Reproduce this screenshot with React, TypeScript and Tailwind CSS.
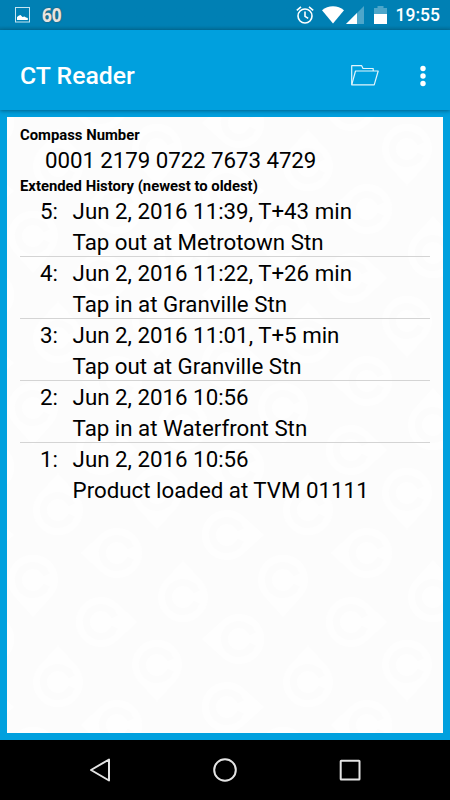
import React from 'react';

type Direction = 'up' | 'down' | 'left' | 'right';

interface Pin {
  x: number;
  y: number;
  dir: Direction;
}

interface Trip {
  index: number;
  time: string;
  detail: string;
}

const trips: Trip[] = [
  { index: 5, time: 'Jun 2, 2016 11:39, T+43 min', detail: 'Tap out at Metrotown Stn' },
  { index: 4, time: 'Jun 2, 2016 11:22, T+26 min', detail: 'Tap in at Granville Stn' },
  { index: 3, time: 'Jun 2, 2016 11:01, T+5 min', detail: 'Tap out at Granville Stn' },
  { index: 2, time: 'Jun 2, 2016 10:56', detail: 'Tap in at Waterfront Stn' },
  { index: 1, time: 'Jun 2, 2016 10:56', detail: 'Product loaded at TVM 01111' },
];

// One tile of the watermark, repeated every TILE_W x TILE_H
const TILE_W = 250;
const TILE_H = 172;
const pins: Pin[] = [
  { x: 26, y: 119, dir: 'down' },
  { x: 176, y: 136, dir: 'up' },
  { x: 94, y: 161, dir: 'right' },
  { x: 51, y: 221, dir: 'up' },
  { x: 150, y: 204, dir: 'down' },
  { x: 110, y: 264, dir: 'left' },
  { x: 232, y: 178, dir: 'left' },
  { x: 220, y: 246, dir: 'right' },
];

const angles: Record<Direction, number> = { up: 0, right: 90, down: 180, left: 270 };

function Watermark() {
  const items: React.ReactNode[] = [];
  for (let row = -2; row < 4; row++) {
    for (let col = -1; col < 2; col++) {
      pins.forEach((p, i) => {
        items.push(
          <g key={`${row}-${col}-${i}`} transform={`translate(${p.x + col * TILE_W} ${p.y + row * TILE_H})`}>
            <path d="M0-37L19-16A25 25 0 1 1-19-16Z" fill="#fefefe" transform={`rotate(${angles[p.dir]})`} />
            <path d="M13.5-5A14.5 14.5 0 1 0 13.5 5" fill="none" stroke="#fcfcfc" strokeWidth="7" />
          </g>
        );
      });
    }
  }
  return (
    <svg className="absolute inset-0 h-full w-full" aria-hidden="true">
      {items}
    </svg>
  );
}

function StatusBar() {
  return (
    <div className="flex h-[30px] shrink-0 items-center bg-linear-to-b from-[#0080b4] from-85% to-[#00739f] pl-[15px] pr-[10px]">
      <svg width="15" height="16" viewBox="0 0 15 16" fill="none">
        <rect x=".5" y=".5" width="14" height="14.5" stroke="#c5e5f1" />
        <path d="M2 13V10L4 8.5 5.5 8 7.5 10 9.5 9.5 11 10.5 12.8 11V13Z" fill="#fff" />
      </svg>
      <span className="ml-[12px] inline-block w-5 origin-left scale-x-[0.86] font-['Noto_Sans'] text-[20px] font-bold leading-none text-[#e8e4e0] [text-shadow:0_0_2px_#444]">
        60
      </span>

      <svg className="ml-auto" width="18" height="20" viewBox="0 0 18 20" fill="none" stroke="#fff" strokeWidth="1.6">
        <circle cx="9" cy="11" r="7" />
        <path d="M9 6.5V11.3L12.2 13.4M.8 5.4L5 1.9M17.2 5.4L13 1.9" />
      </svg>
      <svg className="ml-[8px]" width="22" height="18" viewBox="0 0 22 18" fill="#fff">
        <path d="M0 4.2C6-1.2 16-1.2 22 4.2L11 17.6Z" />
      </svg>
      <svg className="ml-[2px]" width="18" height="18" viewBox="0 0 18 18">
        <path d="M0 18L18 0V18Z" fill="#4da6ca" />
        <path d="M0 18L11 7V18Z" fill="#fff" />
      </svg>
      <svg className="ml-[10px]" width="13" height="18" viewBox="0 0 13 18">
        <path d="M0 2H3.5V0H9.5V2H13V8H0Z" fill="#4da6ca" />
        <path d="M0 8H13V18H0Z" fill="#fff" />
      </svg>
      <span className="ml-[9px] pt-[2px] text-[17.5px] font-medium leading-none text-white">19:55</span>
    </div>
  );
}

function AppBar() {
  return (
    <header className="flex h-20 shrink-0 items-center bg-[#00a0de] pb-0 pl-5 pr-[24.5px] pt-[11px] shadow-[0_1px_4px_rgba(0,40,60,0.5)]">
      <h1 className="pt-px text-[24.8px] font-medium leading-none text-white">CT Reader</h1>
      <svg className="ml-auto" width="28" height="21" viewBox="0 0 28 21" fill="none" stroke="#e2f5fc" strokeWidth="1.2" strokeLinejoin="round">
        <path d="M.7 19.5V.7H10.7L12 3.5H22.2V6" />
        <path d="M.7 19.8L4.5 6H27.2L23.2 19.8Z" />
      </svg>
      <svg className="ml-[41px]" width="6" height="22" viewBox="0 0 6 22" fill="#fff">
        <circle cx="3" cy="3.5" r="2.7" />
        <circle cx="3" cy="11" r="2.7" />
        <circle cx="3" cy="18.5" r="2.7" />
      </svg>
    </header>
  );
}

function NavBar() {
  return (
    <nav className="flex h-[60px] shrink-0 items-center justify-between bg-black px-[88px]">
      <svg width="24" height="24" viewBox="0 0 24 24" fill="none" stroke="#e4e4e4" strokeWidth="2" strokeLinejoin="round">
        <path d="M21 1.5V22.5L3 12Z" />
      </svg>
      <svg width="24" height="24" viewBox="0 0 24 24" fill="none" stroke="#e4e4e4" strokeWidth="2">
        <circle cx="12" cy="12" r="10.8" />
      </svg>
      <svg width="24" height="24" viewBox="0 0 24 24" fill="none" stroke="#e4e4e4" strokeWidth="2">
        <rect x="2.7" y="2.8" width="18.8" height="18.8" rx=".5" />
      </svg>
    </nav>
  );
}

export default function App() {
  return (
    <div className="flex h-[800px] w-[450px] flex-col overflow-hidden bg-[#00a0de] font-[Roboto,sans-serif] text-black">
      <StatusBar />
      <AppBar />

      <main className="flex flex-1 px-[7.4px] pb-[7.5px] pt-[7px]">
        <div className="relative flex-1 overflow-hidden bg-[#fcfcfc]">
          <Watermark />
          <div className="relative px-[12.6px] pt-[9px]">
            <h2 className="text-[14.85px] font-bold leading-[18px]">Compass Number</h2>
            <p className="pl-[25px] text-[22.3px] leading-[33px] tracking-[-0.06px]">0001 2179 0722 7673 4729</p>
            <h2 className="text-[14.85px] font-bold leading-[18px]">Extended History (newest to oldest)</h2>
            <ul>
              {trips.map((trip) => (
                <li
                  key={trip.index}
                  className="flex h-[62px] border-b border-[#d4d4d4] pt-[1px] text-[22.3px] leading-[30.5px] last:border-b-0"
                >
                  <span className="w-[52.6px] shrink-0 pl-5">{trip.index}:</span>
                  <div className="whitespace-nowrap">
                    <p>{trip.time}</p>
                    <p>{trip.detail}</p>
                  </div>
                </li>
              ))}
            </ul>
          </div>
        </div>
      </main>

      <NavBar />
    </div>
  );
}
